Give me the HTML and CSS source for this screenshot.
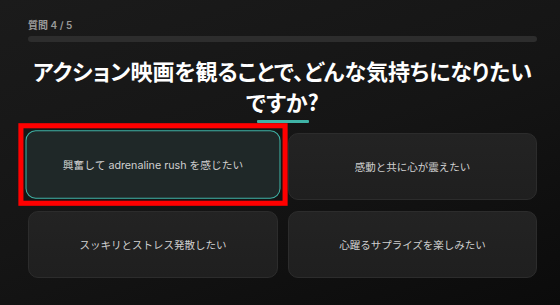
FILE: index.html
```html
<!DOCTYPE html>
<html lang="ja">
<head>
<meta charset="utf-8">
<link rel="stylesheet" href="styles.css">
</head>
<body>
<main class="quiz">
  <div class="counter">質問 4 / 5</div>
  <div class="progress"><div class="progress-fill"></div></div>
  <h1 class="question">アクション映画を観ることで、どんな気持ちになりたいですか?</h1>
  <div class="accent"></div>
  <div class="options">
    <button class="option selected">興奮して adrenaline rush を感じたい</button>
    <button class="option">感動と共に心が震えたい</button>
    <button class="option">スッキリとストレス発散したい</button>
    <button class="option">心躍るサプライズを楽しみたい</button>
  </div>
</main>
</body>
</html>
```
FILE: styles.css
```css
html, body {
  margin: 0;
  height: 100%;
}
body {
  background: linear-gradient(160deg, #1b1b1b 0%, #151515 50%, #0b0b0b 100%);
  font-family: "Noto Sans CJK JP", "Noto Sans", sans-serif;
  color: #fff;
  overflow: hidden;
}
.quiz {
  padding: 18px 23px 0 28px;
  display: flex;
  flex-direction: column;
}
.counter {
  font-family: "Inter", "Noto Sans CJK JP", sans-serif;
  font-size: 10px;
  line-height: 14px;
  color: #9a9a9a;
  font-weight: 600;
}
.progress {
  margin-top: 4px;
  height: 6px;
  border-radius: 3px;
  background: #2d2d2d;
}
.progress-fill {
  width: 0;
}
.question {
  margin: 13px 0 0;
  font-size: 22px;
  line-height: 31px;
  font-weight: 700;
  text-align: center;
  font-feature-settings: "palt";
  padding: 0 4px;
}
.accent {
  align-self: center;
  width: 52px;
  height: 3px;
  background: #3fb3a6;
  margin-top: 3px;
  border-radius: 1px;
}
.options {
  margin-top: 10px;
  display: grid;
  grid-template-columns: 250px 249px;
  grid-auto-rows: 67px;
  column-gap: 10px;
  row-gap: 11px;
}
.option {
  position: relative;
  font-family: "Inter", "Noto Sans CJK JP", sans-serif;
  font-size: 10.5px;
  color: #cfcfcf;
  background: linear-gradient(180deg, #232323, #1f1f1f);
  border: 1px solid #2c2c2c;
  border-radius: 10px;
  padding: 0;
}
.option.selected {
  background: #1f2828;
  border: 1.5px solid #3fb3a6;
  transform: translateY(-2px) scale(1.02);
}
.option.selected::after {
  content: "";
  position: absolute;
  inset: -8px;
  border: 5px solid #f00;
  pointer-events: none;
}
```
